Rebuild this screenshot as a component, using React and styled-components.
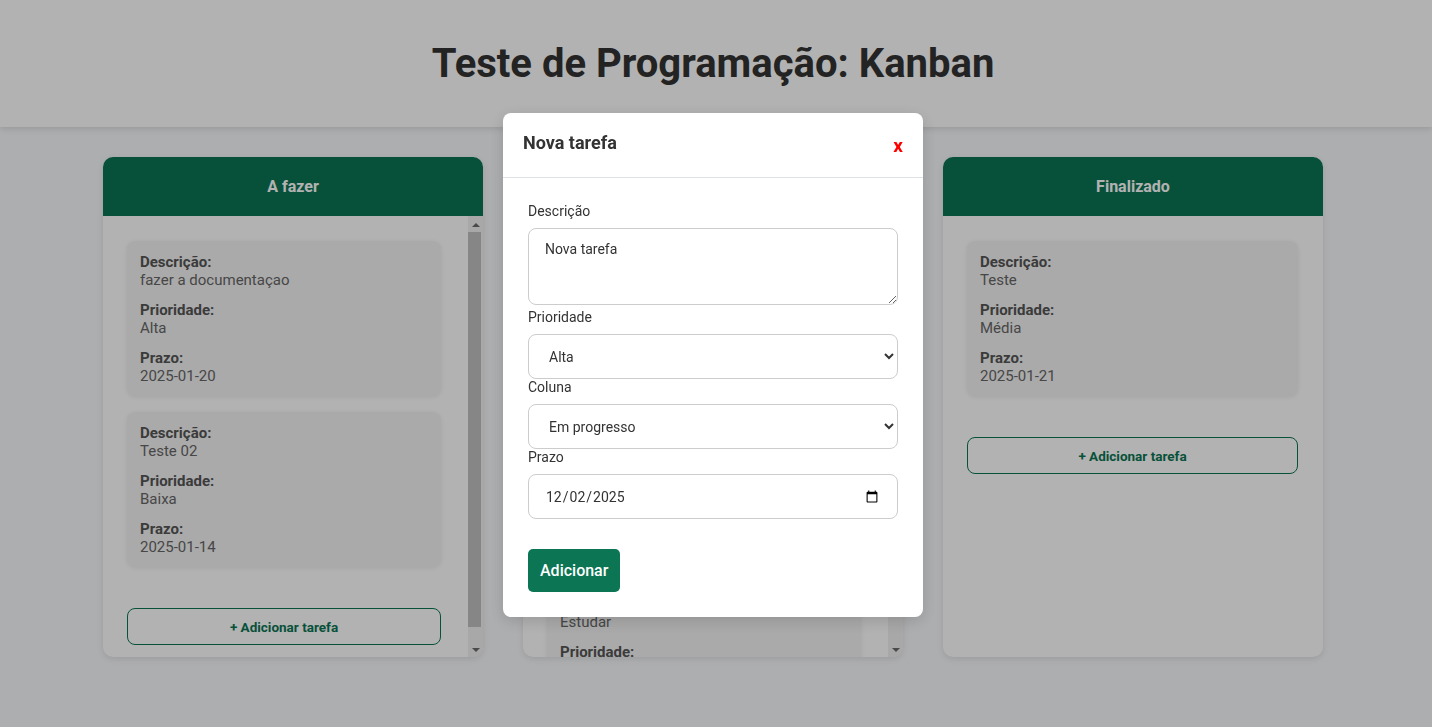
import { useState } from 'react';
import styled, { createGlobalStyle } from 'styled-components';

const GlobalStyle = createGlobalStyle`
  * {
    box-sizing: border-box;
  }
  body {
    margin: 0;
    background: #f8f9fc;
    font-family: Roboto, 'Liberation Sans', sans-serif;
    color: #333;
  }
`;

const GREEN = '#0b7554';
const BODY_HEIGHT = 441;

const columns = [
  {
    title: 'A fazer',
    tasks: [
      { descricao: 'fazer a documentaçao', prioridade: 'Alta', prazo: '2025-01-20' },
      { descricao: 'Teste 02', prioridade: 'Baixa', prazo: '2025-01-14' },
    ],
  },
  {
    title: 'Em progresso',
    tasks: [
      { descricao: 'Criar componentes', prioridade: 'Alta', prazo: '2025-01-18' },
      { descricao: 'Revisar layout', prioridade: 'Média', prazo: '2025-01-19' },
      { descricao: 'Estudar', prioridade: 'Baixa', prazo: '2025-01-25' },
    ],
  },
  {
    title: 'Finalizado',
    tasks: [{ descricao: 'Teste', prioridade: 'Média', prazo: '2025-01-21' }],
  },
];

// altura aproximada do conteúdo da coluna (cards + botão)
const contentHeight = (n) => 115 + n * 171;

function ScrollBar({ ratio }) {
  return (
    <Track>
      <Arrow $up />
      <Rail>
        <Thumb style={{ height: `${ratio * 100}%` }} />
      </Rail>
      <Arrow />
    </Track>
  );
}

function App() {
  const [values, setValues] = useState({
    descricao: 'Nova tarefa',
    prioridade: 'Alta',
    coluna: 'Em progresso',
    prazo: '2025-12-02',
  });

  const handleChange = (e) => {
    setValues({ ...values, [e.target.name]: e.target.value });
  };

  return (
    <>
      <GlobalStyle />
      <Page>
        <Header>
          <h1>Teste de Programação: Kanban</h1>
        </Header>
        <Board>
          {columns.map((col) => {
            const total = contentHeight(col.tasks.length);
            const scrolls = total > BODY_HEIGHT;
            return (
              <Column key={col.title}>
                <ColumnTitle>{col.title}</ColumnTitle>
                <ColumnBody>
                  <ColumnContent $scrolls={scrolls}>
                    {col.tasks.map((task, i) => (
                      <Card key={i}>
                        <Field>
                          <strong>Descrição:</strong>
                          <span>{task.descricao}</span>
                        </Field>
                        <Field>
                          <strong>Prioridade:</strong>
                          <span>{task.prioridade}</span>
                        </Field>
                        <Field>
                          <strong>Prazo:</strong>
                          <span>{task.prazo}</span>
                        </Field>
                      </Card>
                    ))}
                    <AddButton type='button'>+ Adicionar tarefa</AddButton>
                  </ColumnContent>
                  {scrolls && <ScrollBar ratio={BODY_HEIGHT / total} />}
                </ColumnBody>
              </Column>
            );
          })}
        </Board>
      </Page>

      {/* modal */}
      <Overlay>
        <Modal>
          <ModalHeader>
            <h2>Nova tarefa</h2>
            <CloseButton type='button'>x</CloseButton>
          </ModalHeader>
          <ModalBody>
            <Label htmlFor='descricao'>Descrição</Label>
            <TextArea
              id='descricao'
              name='descricao'
              value={values.descricao}
              onChange={handleChange}
            />
            <Label htmlFor='prioridade'>Prioridade</Label>
            <Select
              id='prioridade'
              name='prioridade'
              value={values.prioridade}
              onChange={handleChange}
            >
              <option>Alta</option>
              <option>Média</option>
              <option>Baixa</option>
            </Select>
            <Label htmlFor='coluna'>Coluna</Label>
            <Select
              id='coluna'
              name='coluna'
              value={values.coluna}
              onChange={handleChange}
            >
              <option>A fazer</option>
              <option>Em progresso</option>
              <option>Finalizado</option>
            </Select>
            <Label htmlFor='prazo'>Prazo</Label>
            <Input
              type='date'
              id='prazo'
              name='prazo'
              value={values.prazo}
              onChange={handleChange}
            />
            <SubmitButton type='button'>Adicionar</SubmitButton>
          </ModalBody>
        </Modal>
      </Overlay>
    </>
  );
}

const Page = styled.div`
  min-height: 100vh;
`;

const Header = styled.header`
  height: 127px;
  background: #fff;
  box-shadow: 0 2px 6px rgba(0, 0, 0, 0.12);
  display: flex;
  align-items: center;
  justify-content: center;
  padding-right: 6px;
  h1 {
    margin: 0;
    font-size: 40px;
    font-weight: 700;
    color: #333;
  }
`;

const Board = styled.main`
  display: flex;
  justify-content: center;
  gap: 40px;
  margin-top: 30px;
  padding-right: 6px;
`;

const Column = styled.section`
  width: 380px;
  height: 500px;
  background: #fff;
  border-radius: 10px;
  box-shadow: 0 2px 6px rgba(0, 0, 0, 0.1);
  display: flex;
  flex-direction: column;
  overflow: hidden;
`;

const ColumnTitle = styled.h3`
  margin: 0;
  height: 59px;
  flex-shrink: 0;
  background: ${GREEN};
  color: #fff;
  font-size: 16px;
  font-weight: 700;
  display: flex;
  align-items: center;
  justify-content: center;
`;

const ColumnBody = styled.div`
  height: ${BODY_HEIGHT}px;
  display: flex;
`;

const ColumnContent = styled.div`
  flex: 1;
  min-width: 0;
  overflow-y: auto;
  scrollbar-width: none;
  padding: 25px ${(p) => (p.$scrolls ? '27px' : '25px')} 28px 24px;
  display: flex;
  flex-direction: column;
`;

const Track = styled.div`
  width: 15px;
  flex-shrink: 0;
  background: #f1f1f1;
  display: flex;
  flex-direction: column;
`;

const Arrow = styled.div`
  height: 16px;
  flex-shrink: 0;
  display: flex;
  align-items: center;
  justify-content: center;
  &::before {
    content: '';
    width: 0;
    height: 0;
    border-left: 4px solid transparent;
    border-right: 4px solid transparent;
    ${(p) =>
      p.$up
        ? 'border-bottom: 4px solid #6a6a6a; margin-top: 1px;'
        : 'border-top: 4px solid #6a6a6a; margin-top: 2px;'}
  }
`;

const Rail = styled.div`
  flex: 1;
  padding: 0 2px 0 0;
`;

const Thumb = styled.div`
  background: #c1c1c1;
`;

const Card = styled.article`
  flex-shrink: 0;
  background: #f4f4f4;
  border-radius: 8px;
  box-shadow: 0 1px 4px rgba(0, 0, 0, 0.08);
  padding: 12px 13px 11px;
  margin-bottom: 16px;
  display: flex;
  flex-direction: column;
  gap: 12px;
`;

const Field = styled.div`
  display: flex;
  flex-direction: column;
  font-size: 15px;
  line-height: 18px;
  strong {
    color: #555;
    font-weight: 700;
  }
  span {
    color: #666;
  }
`;

const AddButton = styled.button`
  flex-shrink: 0;
  margin-top: 25px;
  height: 37px;
  background: transparent;
  border: 1px solid ${GREEN};
  border-radius: 8px;
  color: ${GREEN};
  font-family: Roboto, 'Liberation Sans', sans-serif;
  font-size: 13.5px;
  font-weight: 700;
  cursor: pointer;
`;

const Overlay = styled.div`
  position: fixed;
  inset: 0;
  background: rgba(0, 0, 0, 0.3);
  padding-right: 6px;
  display: flex;
  justify-content: center;
  align-items: flex-start;
  padding-top: 113px;
`;

const Modal = styled.div`
  width: 420px;
  background: #fff;
  border-radius: 8px;
  box-shadow: 0 4px 16px rgba(0, 0, 0, 0.15);
`;

const ModalHeader = styled.div`
  height: 65px;
  padding: 0 20px;
  border-bottom: 1px solid #dee2e6;
  display: flex;
  align-items: center;
  justify-content: space-between;
  h2 {
    margin: -5px 0 0;
    font-size: 18px;
    font-weight: 700;
    color: #333;
  }
`;

const CloseButton = styled.button`
  background: none;
  border: none;
  padding: 0;
  color: red;
  font-family: Roboto, 'Liberation Sans', sans-serif;
  font-size: 19px;
  font-weight: 700;
  cursor: pointer;
`;

const ModalBody = styled.form`
  padding: 25px;
  display: flex;
  flex-direction: column;
  align-items: flex-start;
`;

const Label = styled.label`
  display: block;
  font-size: 14px;
  line-height: 17px;
  color: #333;
  margin-bottom: 8px;
`;

const fieldStyle = `
  width: 100%;
  border: 1px solid #ccc;
  border-radius: 8px;
  background: #fff;
  font-family: Roboto, 'Liberation Sans', sans-serif;
  font-size: 14px;
  color: #333;
`;

const TextArea = styled.textarea`
  ${fieldStyle}
  display: block;
  height: 77px;
  padding: 12px 16px;
  margin-bottom: 4px;
  resize: vertical;
`;

const Select = styled.select`
  ${fieldStyle}
  height: 45px;
  padding: 0 16px;
`;

const Input = styled.input`
  ${fieldStyle}
  height: 45px;
  padding: 0 16px;
`;

const SubmitButton = styled.button`
  margin-top: 30px;
  padding: 12px;
  background: ${GREEN};
  color: #fff;
  border: none;
  border-radius: 5px;
  font-family: Roboto, 'Liberation Sans', sans-serif;
  font-size: 16px;
  line-height: 19px;
  font-weight: 500;
  cursor: pointer;
`;

export default App;
